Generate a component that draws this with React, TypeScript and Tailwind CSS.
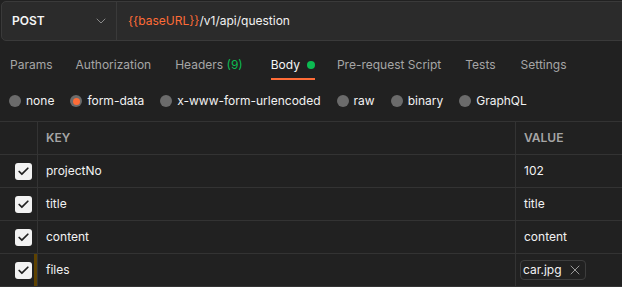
import { ChevronDown, X, Check } from 'lucide-react';

type Row = { key: string; value: string; file?: boolean };

const rows: Row[] = [
    { key: 'projectNo', value: '102' },
    { key: 'title', value: 'title' },
    { key: 'content', value: 'content' },
    { key: 'files', value: 'car.jpg', file: true },
];

// margins tuned per tab so the labels sit where the reference has them
const tabs = [
    { label: 'Params', ml: 'ml-0' },
    { label: 'Authorization', ml: 'ml-[23px]' },
    { label: 'Headers', ml: 'ml-6' },
    { label: 'Body', ml: 'ml-[28px]' },
    { label: 'Pre-request Script', ml: 'ml-[22px]' },
    { label: 'Tests', ml: 'ml-6' },
    { label: 'Settings', ml: 'ml-[25px]' },
];
const bodyTypes = ['none', 'form-data', 'x-www-form-urlencoded', 'raw', 'binary', 'GraphQL'];

function Checkbox() {
    return (
        <span className="w-[17px] h-[17px] rounded-[3px] bg-[#f2f2f2] flex items-center justify-center">
            <Check className="w-[13px] h-[13px] text-[#212121]" strokeWidth={3.2} />
        </span>
    );
}

function App() {
    return (
        <div
            className="w-[622px] h-[287px] overflow-hidden bg-[#212121] text-[12px] text-[#f2f2f2]"
            style={{ fontFamily: 'Inter, "Noto Sans", sans-serif' }}
        >
            {/* url bar */}
            <div className="pt-px pl-px">
                <div className="h-10 w-[700px] flex border border-[#3a3a3a] rounded-l-[5px] bg-[#2b2b2b]">
                    <div className="w-[115px] border-r border-[#3a3a3a] flex items-center justify-between pl-[10px] pr-[7px]">
                        <span className="font-semibold text-[#f5f5f5]">POST</span>
                        <ChevronDown className="w-4 h-4 text-[#8a8a8a]" strokeWidth={1.5} />
                    </div>
                    <div className="flex items-center pl-[11px]">
                        <span className="text-[#ff6c37]">{'{{baseURL}}'}</span>
                        <span className="text-[#f2f2f2]">/v1/api/question</span>
                    </div>
                </div>
            </div>

            {/* tabs */}
            <div className="h-10 flex pl-[10px]">
                {tabs.map((t) => (
                    <div key={t.label} className={`relative h-full flex items-center pt-2 ${t.ml}`}>
                        {t.label === 'Body' ? (
                            <span className="flex items-center gap-[7px] text-[#f5f5f5]">
                                Body
                                <span className="w-[8px] h-[8px] rounded-full bg-[#0cbb52]" />
                            </span>
                        ) : t.label === 'Headers' ? (
                            <span className="text-[#a6a6a6]">
                                Headers <span className="text-[#0cbb52]">(9)</span>
                            </span>
                        ) : (
                            <span className="text-[#a6a6a6]">{t.label}</span>
                        )}
                        {t.label === 'Body' && (
                            <span className="absolute left-0 right-0 bottom-px h-[2px] bg-[#ff6c37]" />
                        )}
                    </div>
                ))}
            </div>

            {/* body type radios */}
            <div className="h-10 flex items-center gap-4 pl-[9px]">
                {bodyTypes.map((b) => (
                    <label key={b} className="flex items-center gap-[5px]">
                        {b === 'form-data' ? (
                            <span className="w-[12px] h-[12px] rounded-full bg-[#6b6b6b] flex items-center justify-center">
                                <span className="w-[7px] h-[7px] rounded-full bg-[#ff6c37]" />
                            </span>
                        ) : (
                            <span className="w-[12px] h-[12px] rounded-full bg-[#6b6b6b]" />
                        )}
                        <span className="text-[#f2f2f2]">{b}</span>
                    </label>
                ))}
            </div>

            {/* form-data table */}
            <div className="border-t border-[#333333]">
                <div className="h-[33px] flex border-b border-[#333333]">
                    <div className="w-[38px] border-r border-[#333333]" />
                    <div className="w-[478px] border-r border-[#333333] flex items-center pl-2 font-semibold text-[#a6a6a6]">
                        KEY
                    </div>
                    <div className="flex-1 flex items-center pl-2 font-semibold text-[#a6a6a6]">VALUE</div>
                </div>
                {rows.map((r) => (
                    <div key={r.key} className="h-[33px] flex border-b border-[#333333]">
                        <div className="w-[38px] border-r border-[#333333] flex items-center pl-[15px]">
                            <Checkbox />
                            {r.file && <span className="ml-auto w-[3px] h-full bg-[#5e4200]" />}
                        </div>
                        <div className="w-[478px] border-r border-[#333333] flex items-center pl-2">{r.key}</div>
                        <div className="flex-1 flex items-center pl-2">
                            {r.file ? (
                                <span className="-ml-1 h-[20px] flex items-center gap-[5px] pl-[2px] pr-[2px] border border-[#3d3d3d] rounded-[4px]">
                                    {r.value}
                                    <X className="w-4 h-4 text-[#9a9a9a]" strokeWidth={1.5} />
                                </span>
                            ) : (
                                r.value
                            )}
                        </div>
                    </div>
                ))}
            </div>
        </div>
    );
}

export default App;
